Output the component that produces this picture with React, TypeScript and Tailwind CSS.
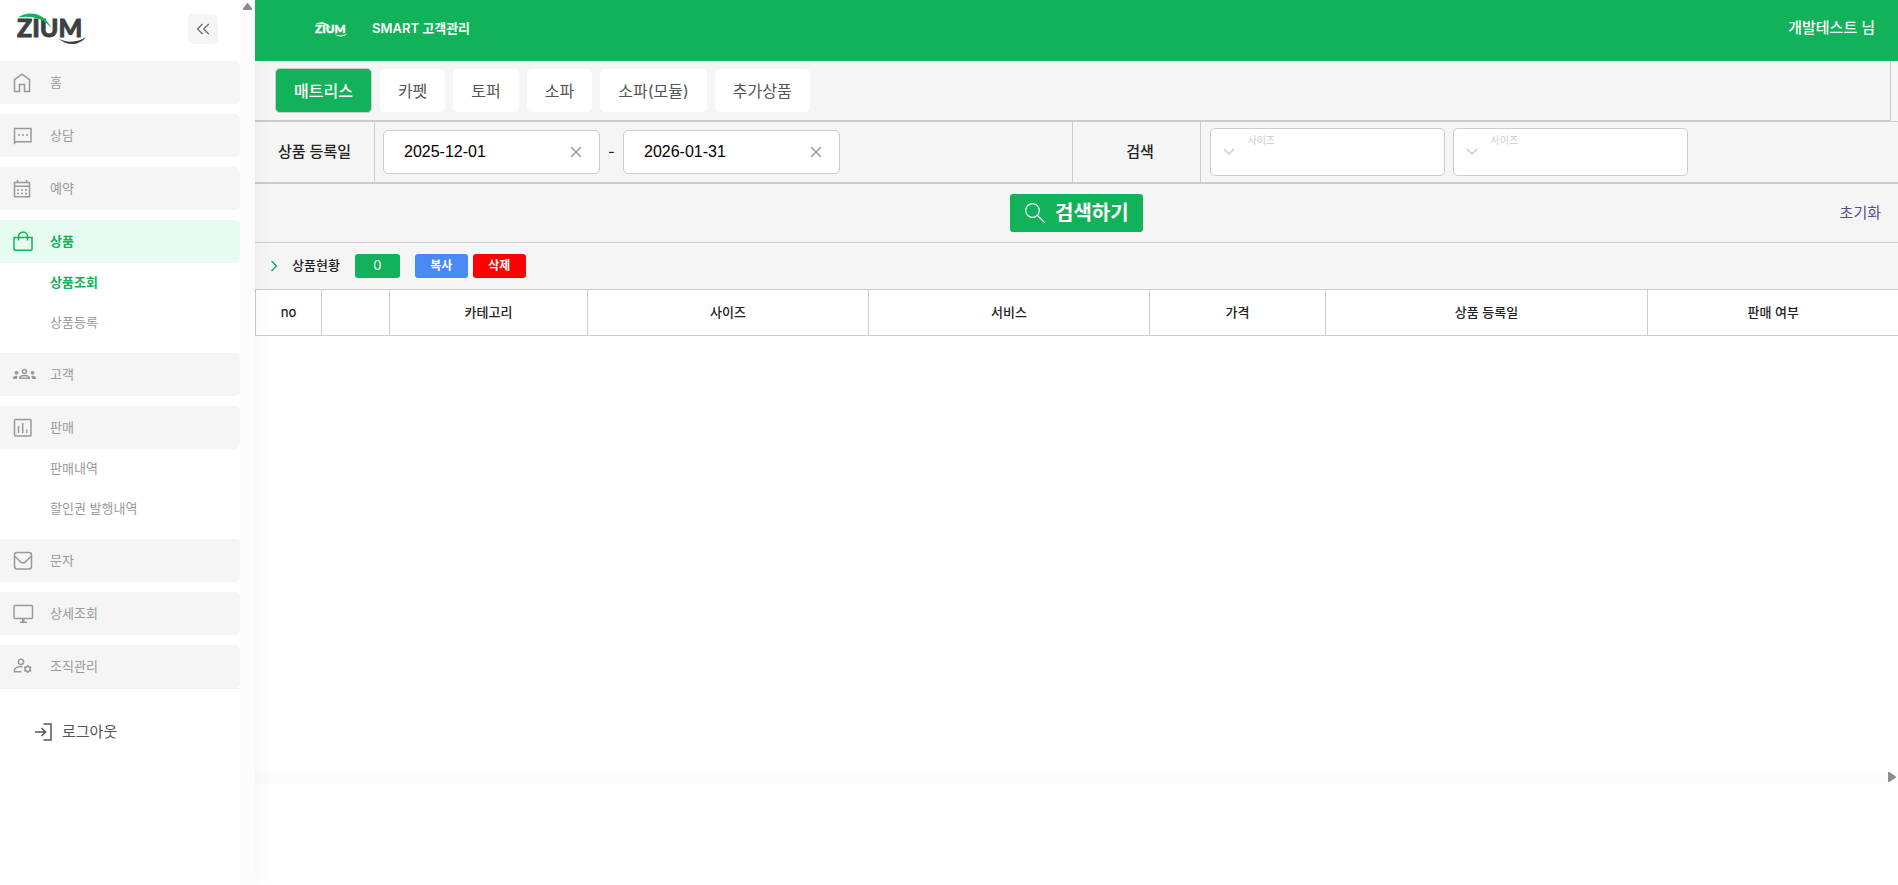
import { useState } from 'react';
import { clsx } from 'clsx';

const tabs = ['매트리스', '카펫', '토퍼', '소파', '소파(모듈)', '추가상품'];

const columns = [
  { label: 'no', width: 'w-[66px]' },
  { label: '', width: 'w-[68px]' },
  { label: '카테고리', width: 'w-[198px]' },
  { label: '사이즈', width: 'w-[281px]' },
  { label: '서비스', width: 'w-[281px]' },
  { label: '가격', width: 'w-[176px]' },
  { label: '상품 등록일', width: 'w-[322px]' },
  { label: '판매 여부', width: 'w-[251px]' },
];

const menus = [
  { label: '홈', icon: 'home' },
  { label: '상담', icon: 'chat' },
  { label: '예약', icon: 'calendar' },
  { label: '상품', icon: 'bag', active: true, children: ['상품조회', '상품등록'] },
  { label: '고객', icon: 'people' },
  { label: '판매', icon: 'chart', children: ['판매내역', '할인권 발행내역'] },
  { label: '문자', icon: 'mail' },
  { label: '상세조회', icon: 'monitor' },
  { label: '조직관리', icon: 'manage' },
];

const MenuIcon = ({ name }: { name: string }) => (
  <svg width="24" height="24" viewBox="0 0 24 24" fill="none" stroke="currentColor" strokeWidth="1.500" aria-hidden="true">
    {name === 'home' && <path d="M2.500 20.500V8.700l7.500-5.500 7.500 5.500v11.800h-5v-7h-5v7z" />}
    {name === 'chat' && (
      <>
        <path d="M2.500 19V4.500h16.500v13.200H4z" />
        <path d="M6 11h2M10 11h2M14 11h2" strokeWidth="1.600" />
      </>
    )}
    {name === 'calendar' && (
      <>
        <path d="M2.500 5.500h15v14.300h-15zM2.500 9.200h15M5.500 3v2.500M14.500 3v2.500" />
        <path d="M5 13h2M9 13h2M13 13h2M5 16.500h2M9 16.500h2M13 16.500h2" strokeWidth="1.600" />
      </>
    )}
    {name === 'bag' && (
      <path d="M2 7.500h18v11.800a1 1 0 0 1-1 1H3a1 1 0 0 1-1-1zM6.500 10.500V6.500a4.500 4.500 0 0 1 9 0v4" />
    )}
    {name === 'people' && (
      <>
        <circle cx="12.500" cy="8.500" r="2" />
        <path d="M7.700 15.300c0-2 2.200-2.800 4.800-2.800s4.800.8 4.800 2.800z" />
        <g fill="currentColor" stroke="none">
          <circle cx="4.500" cy="9.800" r="1.900" />
          <circle cx="20.500" cy="9.800" r="1.900" />
          <path d="M1 16v-1.200c0-1.300 1.600-2 3.500-2l1.200.1c-.5.900-.7 1.800-.7 3.100zM24 16v-1.200c0-1.300-1.600-2-3.500-2l-1.200.1c.5.900.7 1.800.7 3.100z" />
        </g>
      </>
    )}
    {name === 'chart' && (
      <>
        <rect x="2.500" y="3.500" width="16.500" height="16.500" rx="1" />
        <path d="M6.500 17V10M10.700 17V7M14.800 17v-3.500" />
      </>
    )}
    {name === 'mail' && (
      <>
        <rect x="2.500" y="3.500" width="17" height="16.500" rx="2.500" />
        <path d="M3 7.500l5.500 5.300q2.500 2 5 0L19 7.500" />
      </>
    )}
    {name === 'monitor' && (
      <>
        <rect x="2" y="3.500" width="18.500" height="13" rx="1" />
        <path d="M10 17h2.500v3H10z" fill="currentColor" stroke="none" />
        <path d="M8 20.300h7" />
      </>
    )}
    {name === 'manage' && (
      <>
        <circle cx="9" cy="6.800" r="2.600" />
        <path d="M10.500 11.700c-4.500-.5-8 1.200-8 3.400v1.700h7" />
        <circle cx="15.700" cy="14" r="2.500" />
        <path d="M15.700 10v1.500M15.700 16.500V18M12.200 12l1.400.8M17.800 15.200l1.400.8M12.200 16l1.400-.8M17.800 12.800l1.400-.8" />
      </>
    )}
  </svg>
);

const Logo = ({ className, light }: { className: string; light?: boolean }) => (
  <svg viewBox="0 0 70 32" className={className} role="img" aria-label="ZIUM">
    <text
      x="0"
      y="24"
      fontFamily="Lato, sans-serif"
      fontWeight="900"
      fontSize="25"
      fill={light ? '#fff' : '#3b4043'}
      stroke={light ? '#fff' : '#3b4043'}
      strokeWidth=".8">
      ZIUM
    </text>
    <path d="M1 4.500C11-2.500 27-1.500 34.500 15.500 26 5 15 2.500 1 4.500z" fill={light ? '#fff' : '#11b259'} />
    <path d="M41 25C49 33 62 33.500 69 24c-8 5.500-19 6.500-28 1z" fill={light ? '#fff' : '#3b4043'} />
  </svg>
);

const DateField = ({ id, label, initial }: { id: string; label: string; initial: string }) => {
  const [value, setValue] = useState(initial);
  return (
    <div className="flex h-11 w-[217px] items-center rounded-[5px] border border-[#ccc] bg-white pl-5 pr-[18px]">
      <input
        id={id}
        aria-label={label}
        value={value}
        onChange={(e) => setValue(e.target.value)}
        className="w-full min-w-0 bg-transparent font-['Liberation_Sans','Noto_Sans_CJK_KR',sans-serif] text-base text-black outline-none"
      />
      <button type="button" aria-label="지우기" onClick={() => setValue('')} className="cursor-pointer text-[#999]">
        <svg width="10" height="10" viewBox="0 0 10 10" stroke="currentColor" strokeWidth="1.500">
          <path d="M0 0l10 10M10 0L0 10" />
        </svg>
      </button>
    </div>
  );
};

const SizeSelect = ({ id }: { id: string }) => (
  <div className="relative h-12 w-[235px] rounded-[5px] border border-[#ccc] bg-white text-[#ccc]">
    <label htmlFor={id} className="absolute left-[37px] top-1 text-[10px] leading-[14px]">
      사이즈
    </label>
    <svg className="absolute left-3 top-[19px]" width="12" height="8" viewBox="0 0 12 8" fill="none" stroke="currentColor" strokeWidth="1.500">
      <path d="M1 1l5 5 5-5" />
    </svg>
    <select id={id} className="h-full w-full appearance-none bg-transparent pl-[37px] outline-none">
      <option value=""></option>
    </select>
  </div>
);

const Sidebar = () => (
  <aside className="relative z-10 flex w-[255px] shrink-0 bg-white shadow-[0_0_20px_rgba(0,0,0,0.05)]">
    <div className="flex-1">
      <div className="flex h-[61px] items-start justify-between pl-[17px] pr-[22px] pt-[13px]">
        <Logo className="h-8 w-[70px]" />
        <button
          type="button"
          aria-label="메뉴 접기"
          className="mt-px flex size-[30px] cursor-pointer items-center justify-center rounded-[5px] bg-[#f5f5f5] text-[#666]">
          <svg width="14" height="12" viewBox="0 0 14 12" fill="none" stroke="currentColor" strokeWidth="1.200">
            <path d="M6.500 1l-5 5 5 5M12.700 1l-5 5 5 5" />
          </svg>
        </button>
      </div>
      <nav className="flex flex-col gap-2.5 border-b border-[#eee] text-[13px] text-[#999]">
        {menus.map((menu) => (
          <div key={menu.label}>
            <a
              href="#"
              className={clsx(
                'flex h-[43px] items-center gap-3 rounded-r-[5px] pl-3',
                menu.active ? 'bg-[#e6fcf1] font-bold text-[#11b259]' : 'bg-[#f5f5f5]',
              )}>
              <MenuIcon name={menu.icon} />
              <span className="pl-0.5">{menu.label}</span>
            </a>
            {menu.children?.map((child) => (
              <a
                key={child}
                href="#"
                className={clsx('flex h-10 items-center pl-[50px]', child === '상품조회' && 'font-bold text-[#11b259]')}>
                {child}
              </a>
            ))}
          </div>
        ))}
      </nav>
      <button type="button" className="mt-[31px] flex cursor-pointer items-center gap-2.5 pl-[35px] text-[15px] leading-6 text-[#555]">
        <svg width="17" height="18" viewBox="0 0 17 18" fill="none" stroke="currentColor" strokeWidth="1.500" aria-hidden="true">
          <path d="M0 9h10.500M6.500 5l4 4-4 4M8.500 1h7.500v16H8.500" />
        </svg>
        로그아웃
      </button>
    </div>
    <div className="flex w-[15px] justify-center bg-[#fcfcfc] pt-[3px]">
      <svg width="9" height="7" viewBox="0 0 9 7" fill="#8b8b8b">
        <path d="M4 .3a.8.8 0 0 1 1 0l3.800 5A1 1 0 0 1 8 7H1a1 1 0 0 1-.8-1.700z" />
      </svg>
    </div>
  </aside>
);

const App = () => {
  const [tab, setTab] = useState('매트리스');

  return (
    <div className="flex min-h-screen bg-white font-['Inter','Noto_Sans_CJK_KR',sans-serif] text-[#222]">
      <Sidebar />
      <main className="min-w-0 flex-1">
        <header className="relative z-20 flex h-[61px] items-center bg-[#11b259] pb-1 pl-[60px] pr-[23px] text-white">
          <Logo light className="mt-0.5 h-[15px] w-[33px]" />
          <h1 className="ml-6 text-[13px] font-semibold">SMART 고객관리</h1>
          <p className="ml-auto text-[15px] font-medium">개발테스트 님</p>
        </header>

        <section className="bg-[#f5f5f5]">
          <div className="mr-[7px] flex h-[60px] items-center gap-2 border-b border-r border-[#ccc] pl-5">
            {tabs.map((name) => (
              <button
                key={name}
                type="button"
                onClick={() => setTab(name)}
                className={clsx(
                  'cursor-pointer rounded-[5px] px-[18px] text-base',
                  tab === name ? 'h-[45px] border border-[#ccc] bg-[#11b259] font-medium text-white' : 'h-[43px] bg-white text-[#555]',
                )}>
                {name}
              </button>
            ))}
          </div>

          <div className="flex h-[62px] border-y border-[#ccc]">
            <div className="flex w-[120px] items-center justify-center border-r border-[#ccc] text-[15px] font-medium">상품 등록일</div>
            <div className="flex flex-1 items-center pl-2">
              <DateField id="start" label="상품 등록일 시작" initial="2025-12-01" />
              <span className="w-[23px] text-center text-[15px]">-</span>
              <DateField id="end" label="상품 등록일 종료" initial="2026-01-31" />
            </div>
            <div className="flex w-[129px] items-center justify-center border-x border-[#ccc] pl-2 text-[15px] font-medium">검색</div>
            <div className="flex flex-1 items-center gap-2 pl-[9px]">
              <SizeSelect id="size1" />
              <SizeSelect id="size2" />
            </div>
          </div>

          <div className="grid h-[60px] grid-cols-3 items-center border-y border-[#ccc]">
            <span />
            <button
              type="button"
              className="flex h-[38px] w-[133px] cursor-pointer items-center gap-2.5 justify-self-center rounded-[3px] bg-[#11b259] pl-[15px] text-xl font-bold text-white">
              <svg width="20" height="20" viewBox="0 0 20 20" fill="none" stroke="currentColor" strokeWidth="1.200" aria-hidden="true">
                <circle cx="7.500" cy="7.500" r="6.800" />
                <path d="M12.500 12.500L20 20" />
              </svg>
              검색하기
            </button>
            <a href="#" className="mr-[17px] justify-self-end text-[15px] text-[#5a4a9c]">
              초기화
            </a>
          </div>

          <div className="flex h-[46px] items-center pl-4">
            <svg width="6" height="12" viewBox="0 0 6 12" fill="none" stroke="#11b259" strokeWidth="1.500" aria-hidden="true">
              <path d="M.5 1l5 5-5 5" />
            </svg>
            <h2 className="ml-[15px] text-[13px] font-medium">상품현황</h2>
            <span className="ml-[15px] flex h-6 w-[45px] items-center justify-center rounded-[3px] bg-[#11b259] text-[13px] text-white">0</span>
            <button type="button" className="ml-[15px] h-6 w-[53px] cursor-pointer rounded-[3px] bg-[#4a88f4] text-xs font-bold text-white">
              복사
            </button>
            <button type="button" className="ml-[5px] h-6 w-[53px] cursor-pointer rounded-[3px] bg-[#ff0000] text-xs font-bold text-white">
              삭제
            </button>
          </div>
        </section>

        <div className="h-[480px]">
          <table className="w-full table-fixed border-collapse bg-white text-[13px]">
            <thead>
              <tr className="h-[46px]">
                {columns.map((col, i) => (
                  <th key={i} className={clsx('border border-r-0 border-[#ccc] font-medium', col.width)}>
                    {col.label}
                  </th>
                ))}
              </tr>
            </thead>
          </table>
        </div>
        <div className="flex h-[15px] items-center justify-end bg-[#fcfcfc] pr-0.5">
          <svg width="8" height="10" viewBox="0 0 8 10" fill="#8b8b8b">
            <path d="M0 1a1 1 0 0 1 1.600-.8L7.600 4.300a1 1 0 0 1 0 1.400L1.600 9.800A1 1 0 0 1 0 9z" />
          </svg>
        </div>
      </main>
    </div>
  );
};

export default App;
